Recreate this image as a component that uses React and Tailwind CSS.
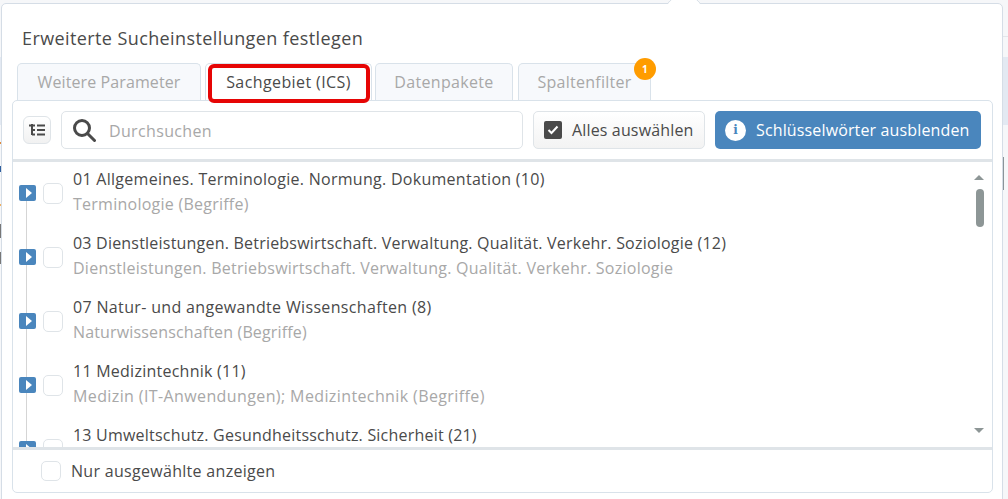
import React from 'react';

const rows = [
  ['01 Allgemeines. Terminologie. Normung. Dokumentation (10)', 'Terminologie (Begriffe)', 'tracking-[0.28px]', 'tracking-[0.25px]'],
  ['03 Dienstleistungen. Betriebswirtschaft. Verwaltung. Qualität. Verkehr. Soziologie (12)', 'Dienstleistungen. Betriebswirtschaft. Verwaltung. Qualität. Verkehr. Soziologie', 'tracking-[0.21px]', 'tracking-[0.25px]'],
  ['07 Natur- und angewandte Wissenschaften (8)', 'Naturwissenschaften (Begriffe)', 'tracking-[0.34px]', 'tracking-[0.15px]'],
  ['11 Medizintechnik (11)', 'Medizin (IT-Anwendungen); Medizintechnik (Begriffe)', 'tracking-[0.25px]', 'tracking-[0.39px]'],
  ['13 Umweltschutz. Gesundheitsschutz. Sicherheit (21)', '', 'tracking-[0.21px]', 'tracking-[0.25px]'],
];

function Tab({ label, active, badge, className }) {
  return (
    <div className={`relative flex h-[37px] items-center justify-center rounded-t-[5px] border border-b-0 border-[#d9e2ea] ${active ? 'bg-white text-[#4a4a4a]' : 'bg-[#f7f9fc] text-[#a8a8a8]'} ${className}`}>
      {label}
      {active && <div className="absolute top-[0px] left-[2px] z-10 h-[39px] w-[162px] rounded-[6px] border-[4px] border-[#e60505]" />}
      {badge && (
        <div className="absolute -top-[6px] -right-[6px] z-10 flex h-[22px] w-[22px] items-center justify-center rounded-full bg-[#ff9c00] text-[10px] font-bold text-white">
          {badge}
        </div>
      )}
    </div>
  );
}

function Row({ title, sub, titleTracking, subTracking }) {
  return (
    <div className="relative h-[64px] shrink-0 pl-[60px]">
      <div className="absolute top-[23px] left-[6px] flex h-[16px] w-[17px] items-center justify-center rounded-[2px] bg-[#4a86bd]">
        <div className="ml-[2px] h-0 w-0 border-y-[5px] border-l-[6px] border-y-transparent border-l-white" />
      </div>
      <div className="absolute top-[21px] left-[30px] h-[21px] w-[20px] rounded-[5px] border border-[#dfe4e8] bg-white" />
      <div className={`pt-[4px] text-[16px] leading-[26px] text-[#4a4a4a] ${titleTracking}`}>{title}</div>
      <div className={`text-[16px] leading-[24px] text-[#a8a8a8] ${subTracking}`}>{sub}</div>
    </div>
  );
}

export default function App() {
  return (
    <div className="flex h-[499px] w-[1008px] overflow-hidden bg-[#f6f7f9] font-['Open_Sans',sans-serif] text-[16px] tracking-[0.25px]">
      {/* page behind the popover, only a sliver is visible on both sides */}
      <div className="w-[1px] shrink-0 pt-[57px]">
        <div className="h-[68px] bg-[#e3e9f2]" />
        <div className="mt-[17px] h-[2px] bg-[#e08a3c]" />
        <div className="mt-[22px] h-[6px] bg-[#2f5f9e]" />
        <div className="mt-[32px] h-[2px] bg-[#f0b060]" />
        <div className="mt-[18px] h-[14px] bg-[#777777]" />
        <div className="mt-[14px] h-[12px] bg-[#777777]" />
      </div>

      <div className="relative mt-[3px] h-[520px] w-[1002px] shrink-0 rounded-[5px] border border-[#d5dde6] bg-white">
        {/* arrow on top of the popover */}
        <div className="absolute -top-[13px] left-[670px] h-[24px] w-[24px] rotate-45 rounded-[2px] border-t border-l border-[#d5dde6] bg-white" />

        <div className="relative pt-[21px] pl-[20px] text-[18px] leading-[26px] tracking-[0.4px] text-[#4a4a4a]">Erweiterte Sucheinstellungen festlegen</div>

        <div className="relative mt-[12px] flex pl-[15px]">
          <Tab label="Weitere Parameter" className="w-[184px] tracking-[0.1px]" />
          <Tab label="Sachgebiet (ICS)" active className="ml-[4px] w-[167px] tracking-[0.4px]" />
          <Tab label="Datenpakete" className="ml-[3px] w-[138px] tracking-[0.33px]" />
          <Tab label="Spaltenfilter" badge="1" className="ml-[5px] w-[133px]" />
        </div>

        <div className="relative ml-[10px] flex h-[393px] w-[981px] flex-col rounded-[5px] border border-[#d9e2ea] bg-white">
          <div className="flex h-[58px] shrink-0 items-start gap-[10px] pt-[10px] pl-[10px]">
            <button className="mt-[5px] flex h-[28px] w-[28px] items-center justify-center rounded-[6px] border border-[#dfe4e8] bg-linear-to-b from-white to-[#f1f1f1]">
              <svg width="16" height="12" viewBox="0 0 16 12" fill="none" stroke="#4a4a4a" strokeWidth="2">
                <path d="M3 0v11M0 1.5h6M3 6h3M3 10.5h3M8 1.5h8M8 6h8M8 10.5h8" />
              </svg>
            </button>
            <div className="flex h-[38px] w-[462px] items-center rounded-[5px] border border-[#dfe4e8] bg-white pl-[10px]">
              <svg width="24" height="24" viewBox="0 0 24 24" fill="none" stroke="#4a4a4a" strokeWidth="3">
                <circle cx="10" cy="10" r="7.5" />
                <path d="M15.5 15.5l7 7" strokeLinecap="round" />
              </svg>
              <span className="mt-[1px] ml-[13px] tracking-[0.35px] text-[#a8a8a8]">Durchsuchen</span>
            </div>
            <button className="flex h-[38px] w-[172px] items-center rounded-[5px] border border-[#dfe4e8] bg-linear-to-b from-white to-[#f3f3f3] pl-[10px] tracking-[0.15px] text-[#4a4a4a]">
              <span className="flex h-[18px] w-[18px] items-center justify-center rounded-[2px] bg-[#4a4a4a]">
                <svg width="12" height="10" viewBox="0 0 12 10" fill="none" stroke="white" strokeWidth="2">
                  <path d="M1.5 5l3 3 6-6.5" />
                </svg>
              </span>
              <span className="ml-[10px]">Alles auswählen</span>
            </button>
            <button className="flex h-[38px] w-[266px] items-center rounded-[5px] bg-[#4a86bd] pl-[10px] tracking-[0.14px] text-white">
              <span className="flex h-[21px] w-[21px] items-center justify-center rounded-full bg-white font-['DejaVu_Serif',serif] text-[12px] font-bold text-[#4a86bd]">i</span>
              <span className="ml-[10px]">Schlüsselwörter ausblenden</span>
            </button>
          </div>

          <div className="relative h-[291px] shrink-0 overflow-hidden border-y-[3px] border-[#dfe4e8]">
            <div className="absolute top-[39px] bottom-0 left-[13px] w-[1px] bg-[#d5d5d5]" />
            {rows.map((r) => (
              <Row key={r[0]} title={r[0]} sub={r[1]} titleTracking={r[2]} subTracking={r[3]} />
            ))}
            <div className="absolute top-[13px] right-[8px] h-0 w-0 border-x-[5px] border-b-[5px] border-x-transparent border-b-[#8d9696]" />
            <div className="absolute top-[27px] right-[8px] h-[38px] w-[8px] rounded-full bg-[#8d9696]" />
            <div className="absolute right-[8px] bottom-[14px] h-0 w-0 border-x-[5px] border-t-[5px] border-x-transparent border-t-[#8d9696]" />
          </div>

          <div className="flex flex-1 items-center pl-[28px] tracking-[0.3px] text-[#4a4a4a]">
            <div className="h-[20px] w-[20px] rounded-[5px] border border-[#dfe4e8]" />
            <span className="ml-[10px]">Nur ausgewählte anzeigen</span>
          </div>
        </div>
      </div>

      <div className="flex-1">
        <div className="mt-[36px] h-[21px] border-t border-[#e3e6ea]" />
        <div className="h-[68px] bg-[#e3e9f2]" />
        <div className="mt-[32px] h-[33px] w-[1px] bg-[#8a9499]" />
      </div>
    </div>
  );
}
